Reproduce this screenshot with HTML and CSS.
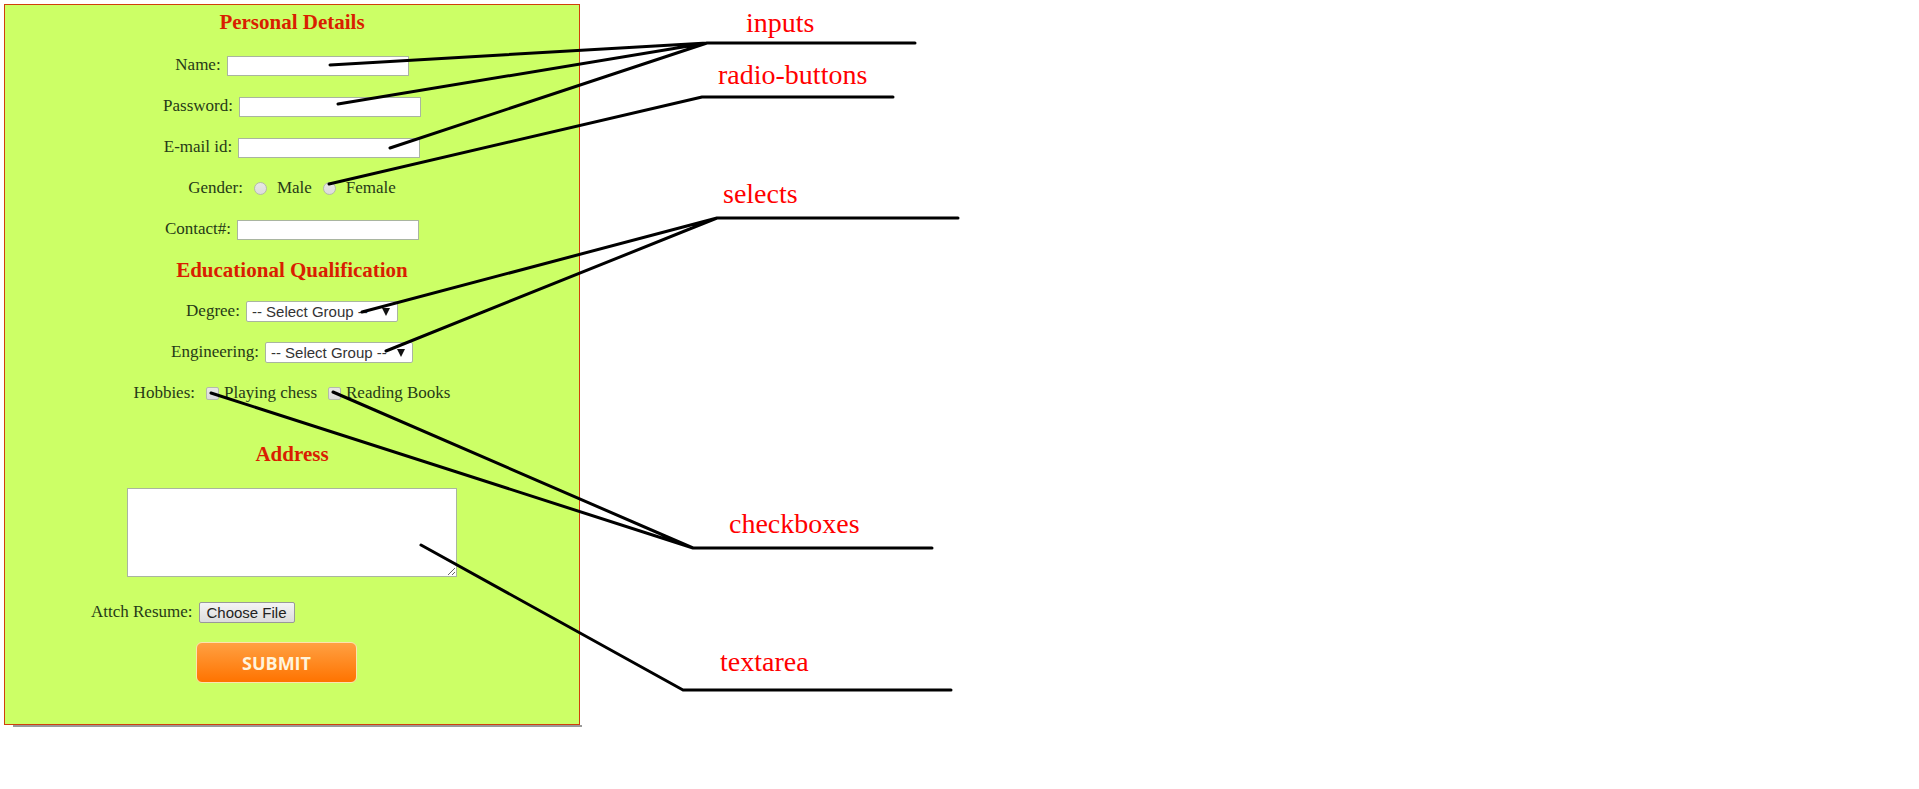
FILE: index.html
```html
<!DOCTYPE html>
<html lang="en">
<head>
<meta charset="utf-8">
<title>Form controls</title>
<link rel="stylesheet" href="styles.css">
</head>
<body>
<main class="board">
  <form class="panel">
    <h2 class="heading first">Personal Details</h2>
    <div class="row"><label for="name">Name:</label><input class="text" id="name" type="text"></div>
    <div class="row"><label for="password">Password:</label><input class="text" id="password" type="password"></div>
    <div class="row"><label for="email">E-mail id:</label><input class="text" id="email" type="email"></div>
    <div class="row choices" role="radiogroup" aria-labelledby="gender">
      <span class="caption" id="gender">Gender:</span>
      <label class="radio"><input type="radio" name="gender"><span>Male</span></label>
      <label class="radio"><input type="radio" name="gender"><span>Female</span></label>
    </div>
    <div class="row"><label for="contact">Contact#:</label><input class="text" id="contact" type="tel"></div>
    <h2 class="heading">Educational Qualification</h2>
    <div class="row"><label for="degree">Degree:</label><span class="picker wide"><select id="degree"><option>-- Select Group --</option></select><svg class="arrow" viewBox="0 0 8 8" aria-hidden="true"><path d="M0 0h8L4 8z"/></svg></span></div>
    <div class="row"><label for="engineering">Engineering:</label><span class="picker"><select id="engineering"><option>-- Select Group --</option></select><svg class="arrow" viewBox="0 0 8 8" aria-hidden="true"><path d="M0 0h8L4 8z"/></svg></span></div>
    <div class="row choices" role="group" aria-labelledby="hobbies">
      <span class="caption" id="hobbies">Hobbies:</span>
      <label class="check"><input type="checkbox"><span>Playing chess</span></label>
      <label class="check"><input type="checkbox"><span>Reading Books</span></label>
    </div>
    <h2 class="heading address"><label for="address">Address</label></h2>
    <textarea class="area" id="address"></textarea>
    <div class="row resume"><label for="resume">Attch Resume:</label><input class="file" id="resume" type="file"></div>
    <button class="submit" type="submit">SUBMIT</button>
  </form>
  <svg class="notes" width="980" height="740" viewBox="0 0 980 740">
    <g class="lines">
      <path d="M330 65L707 43M338 104L707 43M390 148L707 43H915"/>
      <path d="M329 184L702 97H893"/>
      <path d="M362 312L717 218M386 351L717 218H958"/>
      <path d="M211 393L693 548M333 392L693 548H932"/>
      <path d="M421 545L683 690H951"/>
    </g>
    <text x="746" y="32">inputs</text>
    <text x="718" y="84">radio-buttons</text>
    <text x="723" y="203">selects</text>
    <text x="729" y="533">checkboxes</text>
    <text x="720" y="671">textarea</text>
  </svg>
</main>
</body>
</html>
```
FILE: styles.css
```css
body {
  margin: 0;
  background: #fff;
  color: #263a17;
  font: 17px/20px "Liberation Serif", serif;
}
.board {
  position: relative;
  padding: 4px;
}
.panel {
  position: relative;
  box-sizing: border-box;
  width: 576px;
  padding-bottom: 41px;
  border: 1px solid #d0400c;
  background: #ccff66;
  display: flex;
  flex-direction: column;
  align-items: center;
}
.panel::after {
  content: "";
  position: absolute;
  left: 8px;
  right: -3px;
  bottom: -3px;
  height: 2px;
  background: #999;
}
.heading {
  margin: 0;
  font-size: 21px;
  line-height: 41px;
  color: #d91e00;
}
.heading.first {
  margin-bottom: 6px;
  line-height: 34px;
}
.row {
  display: flex;
  align-items: center;
  justify-content: center;
  gap: 6px;
  height: 41px;
}
.row > label,
.caption,
.choices span {
  padding-bottom: 2px;
}
.text {
  box-sizing: border-box;
  width: 182px;
  height: 20px;
  padding: 1px 3px;
  border: 1px solid #a9b5a0;
  background: #fff;
}
.choices {
  gap: 11px;
}
.radio,
.check {
  display: flex;
  align-items: center;
  gap: 10px;
}
.check {
  gap: 5px;
}
.row .radio,
.row .check {
  padding-bottom: 0;
}
.choices input {
  appearance: none;
  box-sizing: border-box;
  width: 13px;
  height: 13px;
  margin: 0;
  border: 1px solid #b4b9ac;
  border-radius: 2px;
  background: linear-gradient(#e8e8e4, #dcdcdc);
}
.choices input[type="radio"] {
  border-radius: 50%;
}
.picker {
  position: relative;
  width: 148px;
}
.picker.wide {
  width: 152px;
}
.picker select {
  appearance: none;
  display: block;
  box-sizing: border-box;
  width: 100%;
  height: 21px;
  padding: 0 5px;
  border: 1px solid #a9b5a0;
  border-radius: 2px;
  background: #fff;
  color: #333;
  font: 15px/18px "Liberation Sans", sans-serif;
}
.arrow {
  position: absolute;
  right: 8px;
  top: 7px;
  width: 8px;
  height: 8px;
  fill: #111;
}
.address {
  margin: 20px 0 13px;
}
.area {
  box-sizing: border-box;
  width: 330px;
  height: 89px;
  border: 1px solid #a9b5a0;
  background: #fff;
}
.resume {
  align-self: flex-start;
  margin: 15px 0 0 86px;
}
.file {
  width: 96px;
  height: 21px;
  overflow: hidden;
  color: transparent;
}
.file::file-selector-button {
  box-sizing: border-box;
  width: 96px;
  height: 21px;
  margin: 0;
  padding: 0;
  border: 1px solid #999;
  border-radius: 2px;
  background: linear-gradient(#f4f4f4, #dcdcdc);
  color: #222;
  font: 15px/18px "Liberation Sans", sans-serif;
}
.submit {
  align-self: flex-start;
  margin: 9px 0 0 191px;
  width: 161px;
  height: 41px;
  padding: 0;
  border: 1px solid #fde3b0;
  border-radius: 6px;
  background: linear-gradient(#ffa042, #ff7300);
  color: #fff4dc;
  font: bold 18px/24px "Open Sans", sans-serif;
}
.notes {
  position: absolute;
  left: 0;
  top: 0;
  pointer-events: none;
  fill: #f00;
  font: 28px "Liberation Serif", serif;
}
.lines {
  fill: none;
  stroke: #000;
  stroke-width: 3px;
  stroke-linecap: round;
  stroke-linejoin: round;
}
```
